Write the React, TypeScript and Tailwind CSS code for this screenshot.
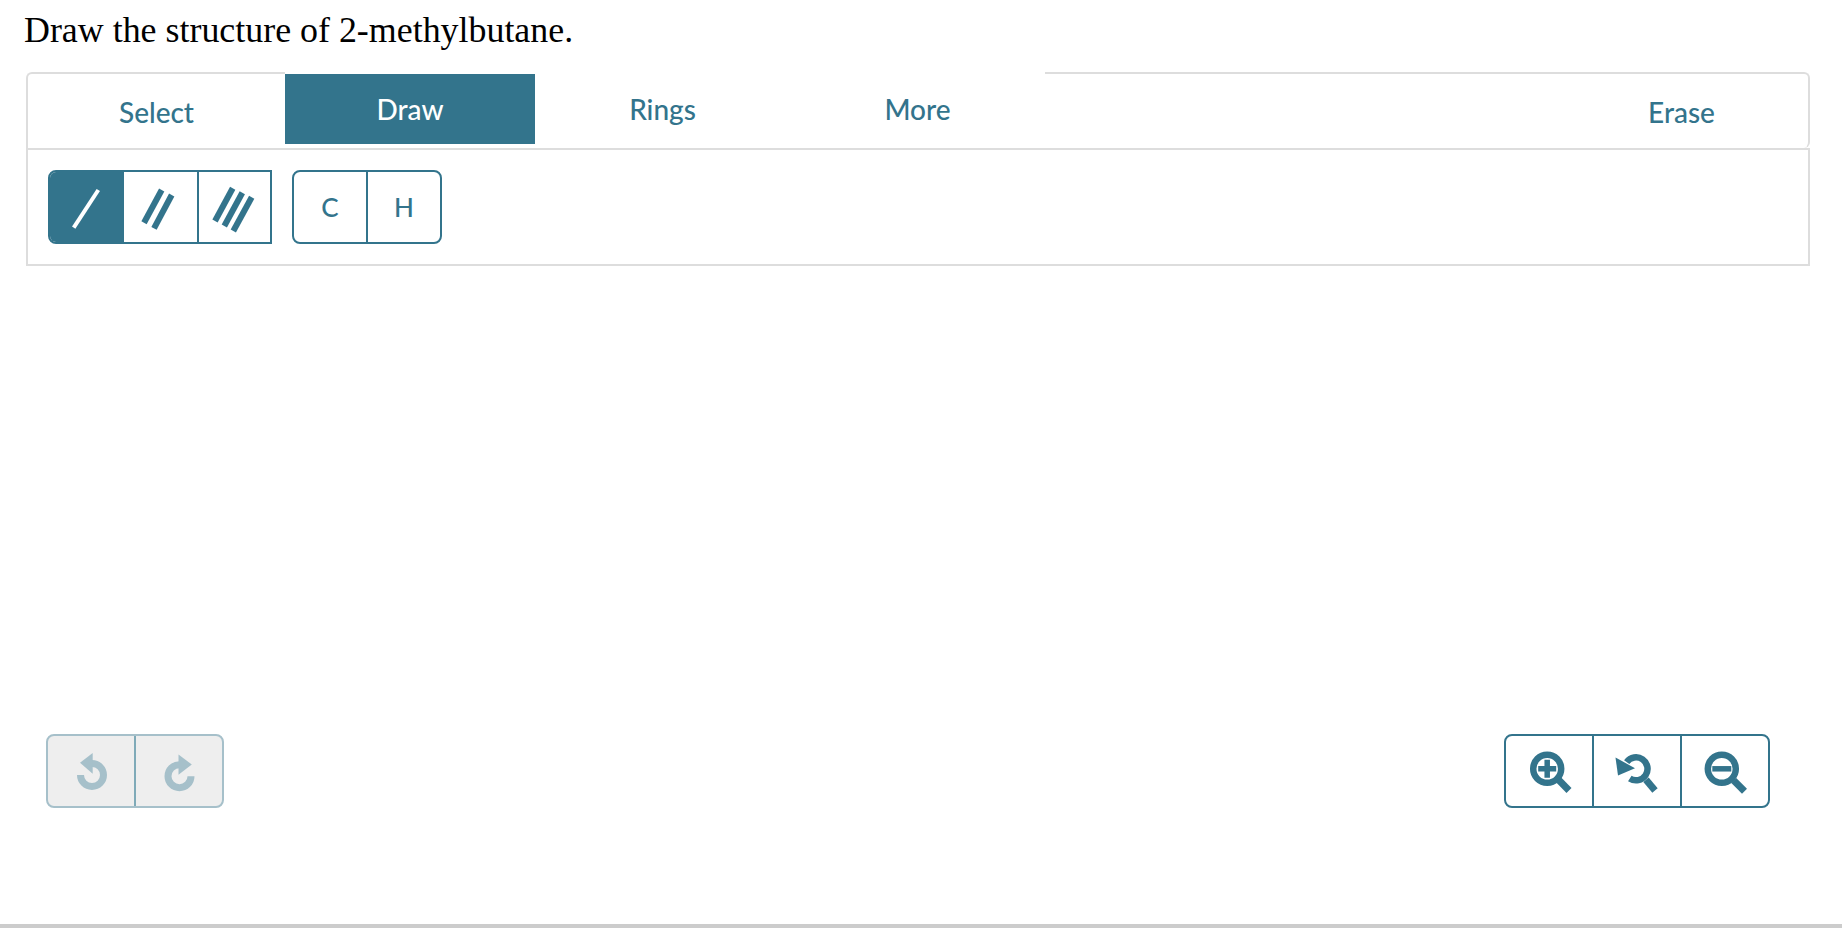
import type { ReactNode } from "react";

const TEAL = "#33748c";
const FADED = "#a6c0ca";

function BondIcon({ lines, color = TEAL, width = 6 }: { lines: number[][]; color?: string; width?: number }) {
  return (
    <svg width="72" height="70" viewBox="2 2 72 70" className="shrink-0">
      {lines.map((l, i) => (
        <line key={i} x1={l[0]} y1={l[1]} x2={l[2]} y2={l[3]} stroke={color} strokeWidth={width} />
      ))}
    </svg>
  );
}

function Icon({ size, children }: { size: number; children: ReactNode }) {
  return (
    <svg width={size} height={size} viewBox={`0 0 ${size} ${size}`} fill="none" className="shrink-0">
      {children}
    </svg>
  );
}

function Tab({ label, active, className }: { label: string; active?: boolean; className?: string }) {
  return (
    <div className={`flex items-center justify-center ${active ? "bg-[#33748c] text-white" : "text-[#33748c]"} ${className ?? ""}`}>
      {label}
    </div>
  );
}

export default function App() {
  return (
    <div className="flex h-screen flex-col overflow-hidden bg-white">
      <h1 className="pl-6 pt-[10px] font-['Liberation_Serif',serif] text-[35.9px] leading-[40px] font-normal text-black">
        Draw the structure of 2-methylbutane.
      </h1>

      <div className="mr-[32px] ml-[26px] mt-[22px] font-['Lato',sans-serif] text-[28px] font-medium">
        {/* tab row */}
        <div className="flex h-[76px]">
          <Tab label="Select" className="w-[259px] rounded-tl-md border-t-2 border-l-2 border-[#ddd] pt-[2px]" />
          <div className="flex pt-[2px] pb-1">
            <Tab label="Draw" active className="w-[250px]" />
            <Tab label="Rings" className="w-[255px]" />
            <Tab label="More" className="w-[255px]" />
          </div>
          <Tab label="Erase" className="flex-1 rounded-tr-md rounded-br-md border-t-2 border-r-2 border-[#ddd] pl-[510px] pt-[2px]" />
        </div>

        {/* tool row */}
        <div className="flex h-[118px] items-center gap-5 border-2 border-[#ddd] pl-5">
          <div className="flex h-[74px] overflow-hidden rounded-l-lg border-2 border-[#33748c]">
            <div className="flex w-[74px] items-center justify-center bg-[#33748c]">
              <BondIcon lines={[[24.7, 57.7, 49.3, 20]]} color="#fff" width={4} />
            </div>
            <div className="flex w-[75px] items-center justify-center border-r-2 border-[#33748c]">
              <BondIcon lines={[[21, 52.7, 38.7, 20], [31, 58.3, 48.7, 25]]} />
            </div>
            <div className="flex w-[71px] items-center justify-center">
              <BondIcon lines={[[18, 51, 35.7, 18.3], [27.3, 56, 45.3, 22.7], [36.3, 61, 54.7, 27.3]]} />
            </div>
          </div>
          <div className="flex h-[74px] rounded-lg border-2 border-[#33748c] text-[26px] text-[#33748c]">
            <div className="flex w-[74px] items-center justify-center border-r-2 border-[#33748c]">C</div>
            <div className="flex w-[72px] items-center justify-center">H</div>
          </div>
        </div>
      </div>

      {/* undo / zoom controls */}
      <div className="mt-[468px] flex justify-between pr-[72px] pl-[46px]">
        <div className="flex h-[74px] rounded-lg border-2 border-[#a6c0ca] bg-[#eee]">
          <div className="flex w-[88px] items-center justify-center border-r-2 border-[#7faab8]">
            <Icon size={44}>
              <path d="M23 14.5A11.5 11.5 0 1 1 11.5 26" stroke={FADED} strokeWidth="7" />
              <path d="M11 13.7L23.7 4V24.7Z" fill={FADED} />
            </Icon>
          </div>
          <div className="flex w-[86px] items-center justify-center">
            <Icon size={44}>
              <path d="M22.5 15.7A11.5 11.5 0 1 0 34 27.2" stroke={FADED} strokeWidth="7" />
              <path d="M21.5 5.5L34.8 15.5L21.5 25.8Z" fill={FADED} />
            </Icon>
          </div>
        </div>

        <div className="flex h-[74px] rounded-lg border-2 border-[#33748c]">
          <div className="flex w-[88px] items-center justify-center border-r-2 border-[#33748c]">
            <Icon size={48}>
              <circle cx="22.2" cy="21.8" r="14" stroke={TEAL} strokeWidth="6.5" />
              <path d="M33.5 32.8L44 43.5" stroke={TEAL} strokeWidth="7" />
              <path d="M13.2 21.8H31.2M22.2 12.8V30.8" stroke={TEAL} strokeWidth="5.5" />
            </Icon>
          </div>
          <div className="flex w-[88px] items-center justify-center border-r-2 border-[#33748c]">
            <Icon size={48}>
              <path d="M13.7 15.1A11.5 11.5 0 1 1 16.8 31.5" stroke={TEAL} strokeWidth="6.5" />
              <path d="M2.5 10.5L5 28.5L22 21.2Z" fill={TEAL} />
              <path d="M33 32.8L42 43.4" stroke={TEAL} strokeWidth="7" />
            </Icon>
          </div>
          <div className="flex w-[86px] items-center justify-center">
            <Icon size={48}>
              <circle cx="20.8" cy="21.8" r="14" stroke={TEAL} strokeWidth="6.5" />
              <path d="M32.8 33.5L43.5 44.2" stroke={TEAL} strokeWidth="7" />
              <path d="M11.3 21.8H30.3" stroke={TEAL} strokeWidth="5.5" />
            </Icon>
          </div>
        </div>
      </div>

      <div className="mt-auto h-1 bg-[#ccc]" />
    </div>
  );
}
